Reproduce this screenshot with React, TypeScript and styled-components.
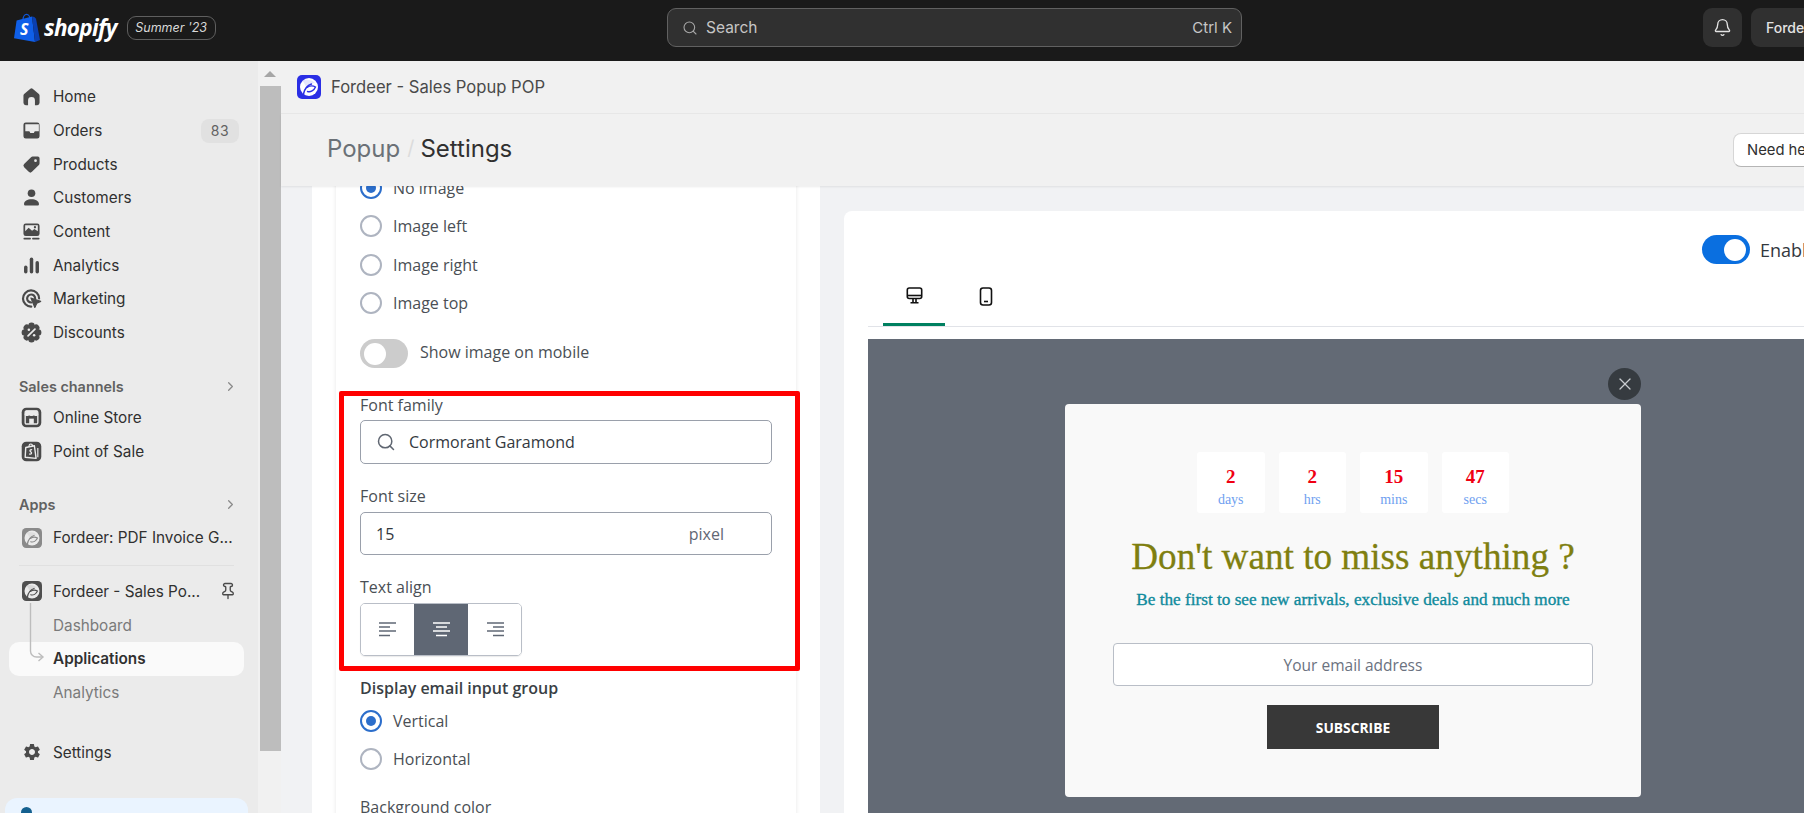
import React from "react";
import styled, { createGlobalStyle } from "styled-components";
import { Bell, ChevronRight, Pin, Search, X } from "lucide-react";
import { MdSettings } from "react-icons/md";

const GlobalStyle = createGlobalStyle`
  html, body {
    margin: 0;
    padding: 0;
    overflow: hidden;
    background: #f1f2f4;
  }
  * {
    box-sizing: border-box;
  }
`;

const uiFont = `Inter, "Liberation Sans", sans-serif`;
const formFont = `"Open Sans", "Noto Sans", sans-serif`;
const popupFont = `"Liberation Serif", serif`;

const Page = styled.div`
  width: 1804px;
  height: 813px;
  overflow: hidden;
  display: flex;
  flex-direction: column;
  font-family: ${uiFont};
`;

/* top bar */
const TopBar = styled.header`
  height: 61px;
  flex-shrink: 0;
  background: #1a1a1a;
  padding-bottom: 6px;
  display: grid;
  grid-template-columns: 667px 575px 1fr;
  align-items: center;
`;

const Brand = styled.div`
  display: flex;
  align-items: center;
  padding-left: 14px;
`;

const Wordmark = styled.span`
  margin-left: 4px;
  color: #fff;
  font: italic 700 22.5px "Open Sans", sans-serif;
  letter-spacing: -0.7px;
`;

const SeasonBadge = styled.span`
  margin-left: 10px;
  height: 24px;
  width: 89px;
  border: 1px solid #5f5f5f;
  border-radius: 9px;
  color: #d8d8d8;
  font-size: 12.5px;
  font-style: italic;
  display: flex;
  align-items: center;
  justify-content: center;
`;

const SearchBox = styled.div`
  height: 39px;
  background: #303030;
  border: 1px solid #616161;
  border-radius: 9px;
  display: flex;
  align-items: center;
  padding: 0 9px 0 14px;
  color: #c6c6c6;
  font-size: 15.5px;
  gap: 8px;
`;

const Shortcut = styled.span`
  margin-left: auto;
  font-size: 15px;
`;

const TopActions = styled.div`
  display: flex;
  gap: 9px;
  padding-left: 461px;
`;

const BellButton = styled.div`
  width: 39px;
  height: 39px;
  flex-shrink: 0;
  border-radius: 9px;
  background: #303030;
  color: #e3e3e3;
  display: flex;
  align-items: center;
  justify-content: center;
`;

const StoreButton = styled.div`
  width: 120px;
  height: 39px;
  flex-shrink: 0;
  border-radius: 9px;
  background: #303030;
  color: #e3e3e3;
  font-size: 14px;
  font-weight: 500;
  padding-left: 15px;
  display: flex;
  align-items: center;
`;

const Body = styled.div`
  flex: 1;
  min-height: 0;
  display: flex;
`;

/* sidebar */
const Sidebar = styled.nav`
  width: 258px;
  flex-shrink: 0;
  background: #ebebeb;
  padding-top: 19px;
  color: #303030;
  font-size: 15.3px;
`;

const NavRow = styled.div<{ $top?: number }>`
  height: 33.7px;
  margin-top: ${(p) => p.$top ?? 0}px;
  padding: 0 24px 0 20px;
  display: flex;
  align-items: center;
  gap: 10px;
  white-space: nowrap;
  color: #303030;
`;

const IconSlot = styled.span<{ $color?: string }>`
  width: 23px;
  height: 23px;
  flex-shrink: 0;
  color: ${(p) => p.$color ?? "#4a4a4a"};
  display: flex;
  align-items: center;
  justify-content: center;
`;

const CountBadge = styled.span`
  margin-left: auto;
  width: 38px;
  height: 24px;
  margin-right: -5px;
  border-radius: 8px;
  background: #e1e1e1;
  color: #616161;
  font-size: 14px;
  letter-spacing: 0.6px;
  display: flex;
  align-items: center;
  justify-content: center;
`;

const SectionHead = styled.div`
  height: 30px;
  margin-top: 21.500px;
  padding: 0 20px 0 19px;
  display: flex;
  align-items: center;
  justify-content: space-between;
  color: #616161;
  font-size: 14.4px;
  font-weight: 600;
`;

const NavDivider = styled.div`
  height: 1px;
  margin: 10px 24px 9px 19px;
  background: #e0e0e0;
`;

const SubNav = styled.div`
  position: relative;
`;

const TreeLine = styled.svg`
  position: absolute;
  left: 28px;
  top: -5px;
  z-index: 1;
`;

const SubRow = styled.div<{ $active?: boolean }>`
  height: 33.7px;
  width: 235px;
  margin-left: 9px;
  padding-left: 44px;
  display: flex;
  align-items: center;
  border-radius: 10px;
  background: ${(p) => (p.$active ? "#fafafa" : "transparent")};
  color: ${(p) => (p.$active ? "#303030" : "#7a7a7a")};
  font-weight: ${(p) => (p.$active ? 600 : 400)};
`;

const PinnedIcon = styled.span`
  margin-left: auto;
  margin-right: -3px;
  color: #4a4a4a;
  display: flex;
`;

const PromoCard = styled.div`
  margin: 29px 10px 0 5px;
  height: 40px;
  padding: 9px 0 0 16px;
  border-radius: 12px;
  background: #eaf4ff;
`;

const PromoDot = styled.span`
  display: block;
  width: 11px;
  height: 11px;
  border-radius: 50%;
  background: #14608f;
`;

const ScrollTrack = styled.div`
  width: 23px;
  flex-shrink: 0;
  background: #f1f1f1;
  display: flex;
  flex-direction: column;
  align-items: flex-end;
`;

const ScrollArrow = styled.div`
  height: 25px;
  width: 100%;
  display: flex;
  align-items: center;
  justify-content: center;
  &::before {
    content: "";
    border-left: 6px solid transparent;
    border-right: 6px solid transparent;
    border-bottom: 6px solid #a6a6a6;
  }
`;

const ScrollThumb = styled.div`
  width: 21px;
  height: 665px;
  background: #bdbdbd;
`;

/* main */
const Main = styled.main`
  width: 1600px;
  flex-shrink: 0;
  display: flex;
  flex-direction: column;
  background: #f1f2f4;
`;

const TitleBar = styled.div`
  height: 53px;
  flex-shrink: 0;
  background: #f1f1f1;
  border-bottom: 1px solid #e8e8e8;
  padding: 0 0 0 16px;
  display: flex;
  align-items: center;
  gap: 10px;
  color: #4a4a4a;
  font-size: 16.6px;
`;

const PageHeader = styled.div`
  height: 72px;
  flex-shrink: 0;
  background: #f1f1f1;
  box-shadow: 0 1px 2px rgba(0, 0, 0, 0.08);
  position: relative;
  z-index: 1;
  padding: 0 38px 0 46px;
  display: flex;
  align-items: center;
`;

const CrumbTrail = styled.div`
  display: flex;
  align-items: center;
  margin-bottom: 4px;
  font-size: 24px;
`;

const CrumbParent = styled.span`
  color: #6b7177;
`;

const CrumbSlash = styled.span`
  margin: 0 6px 0 7px;
  color: #dcdcdc;
  font-size: 20px;
`;

const CrumbCurrent = styled.span`
  color: #303030;
`;

const HelpButton = styled.div`
  margin-left: auto;
  width: 110px;
  height: 34px;
  background: #fff;
  border: 1px solid #d6d6d6;
  border-bottom-color: #b5b5b5;
  border-radius: 8px;
  padding-left: 13px;
  color: #303030;
  font-size: 14.8px;
  display: flex;
  align-items: center;
  white-space: nowrap;
`;

const Content = styled.div`
  flex: 1;
  min-height: 0;
  overflow: hidden;
  display: flex;
  align-items: stretch;
  gap: 24px;
  padding-left: 31px;
`;

/* settings column */
const SettingsColumn = styled.section`
  width: 508px;
  flex-shrink: 0;
  background: #fff;
  padding: 0 24px;
  overflow: hidden;
`;

const SettingsCard = styled.div`
  height: 720px;
  background: #fff;
  padding: 0 24px;
  box-shadow: 0 0 4px rgba(0, 0, 0, 0.1);
  font-family: ${formFont};
  font-size: 16px;
  color: #4a4f55;
`;

const ScrolledForm = styled.div`
  margin-top: -17px;
`;

const RadioRow = styled.div<{ $h?: number; $top?: number }>`
  height: ${(p) => p.$h ?? 38.3}px;
  margin-top: ${(p) => p.$top ?? 0}px;
  display: flex;
  align-items: center;
  gap: 11px;
`;

const RadioMark = styled.span<{ $on?: boolean }>`
  width: 22px;
  height: 22px;
  flex-shrink: 0;
  border-radius: 50%;
  border: 2px solid ${(p) => (p.$on ? "#2c6ecb" : "#aeb4c0")};
  background: #fff;
  display: flex;
  align-items: center;
  justify-content: center;
  &::after {
    content: "";
    display: ${(p) => (p.$on ? "block" : "none")};
    width: 10px;
    height: 10px;
    border-radius: 50%;
    background: #2c6ecb;
  }
`;

const SwitchRow = styled.div`
  margin-top: 17px;
  height: 29px;
  display: flex;
  align-items: center;
  gap: 12px;
`;

const SwitchText = styled.span`
  margin-bottom: 3px;
`;

const Switch = styled.span<{ $on?: boolean }>`
  width: 48px;
  height: 29px;
  flex-shrink: 0;
  border-radius: 15px;
  padding: 0 4px;
  background: ${(p) => (p.$on ? "#0a6fe0" : "#cccccc")};
  display: flex;
  align-items: center;
  justify-content: ${(p) => (p.$on ? "flex-end" : "flex-start")};
  &::after {
    content: "";
    width: 22px;
    height: 22px;
    border-radius: 50%;
    background: #fff;
  }
`;

const FontSection = styled.div`
  position: relative;
  margin-top: 27px;
`;

const RedFrame = styled.div`
  position: absolute;
  left: -21px;
  right: -28px;
  top: -4px;
  bottom: -15px;
  border: 5px solid #ff0000;
  border-radius: 2px;
  pointer-events: none;
`;

const FieldLabel = styled.div<{ $top?: number; $strong?: boolean }>`
  height: 20px;
  margin-top: ${(p) => p.$top ?? 0}px;
  display: flex;
  align-items: center;
  color: ${(p) => (p.$strong ? "#3a3f45" : "#4a4f55")};
  font-weight: ${(p) => (p.$strong ? 600 : 400)};
`;

const TextField = styled.div<{ $h: number; $top: number }>`
  height: ${(p) => p.$h}px;
  margin-top: ${(p) => p.$top}px;
  border: 1px solid #9aa0ab;
  border-radius: 5px;
  background: #fff;
  display: flex;
  align-items: center;
  color: #33383e;
`;

const FieldIcon = styled.span`
  width: 48px;
  padding-left: 15px;
  color: #5f6671;
  display: flex;
`;

const SizeValue = styled.span`
  padding-left: 15px;
`;

const SizeUnit = styled.span`
  margin-left: auto;
  margin-right: 47px;
  color: #5f6774;
`;

const AlignGroup = styled.div`
  margin-top: 6px;
  width: 162px;
  height: 53px;
  display: grid;
  grid-template-columns: 53px 54px 55px;
  border: 1px solid #b9bec7;
  border-radius: 5px;
  box-shadow: 0 1px 1px rgba(0, 0, 0, 0.08);
  overflow: hidden;
`;

const AlignButton = styled.div<{ $on?: boolean }>`
  background: ${(p) => (p.$on ? "#5f6774" : "#fff")};
  color: ${(p) => (p.$on ? "#fff" : "#5f6774")};
  display: flex;
  align-items: center;
  justify-content: center;
`;

/* preview column */
const PreviewCard = styled.section`
  width: 1018px;
  flex-shrink: 0;
  margin-top: 25px;
  background: #fff;
  border-radius: 8px 8px 0 0;
  padding: 24px 24px 0;
  display: flex;
  flex-direction: column;
`;

const EnableRow = styled.div`
  height: 29px;
  padding-left: 834px;
  display: flex;
  align-items: center;
  gap: 10px;
  font-family: ${formFont};
  font-size: 18px;
  font-weight: 500;
  color: #33383e;
`;

const TabStrip = styled.div`
  margin-top: 10px;
  height: 53px;
  flex-shrink: 0;
  padding-left: 15px;
  border-bottom: 1px solid #e1e3e8;
  display: flex;
  gap: 10px;
`;

const DeviceTab = styled.div<{ $on?: boolean }>`
  position: relative;
  width: 62px;
  height: 52px;
  color: #111;
  display: flex;
  align-items: flex-start;
  justify-content: center;
  padding-top: 13px;
  border-bottom: 3px solid ${(p) => (p.$on ? "#008060" : "transparent")};
`;

const PreviewStage = styled.div`
  margin-top: 12px;
  flex: 1;
  background: #636a75;
  padding-top: 65px;
  display: flex;
  justify-content: center;
  align-items: flex-start;
`;

const Popup = styled.div`
  position: relative;
  width: 576px;
  height: 393px;
  background: #f9f9f9;
  border-radius: 4px;
  padding-top: 48px;
  display: flex;
  flex-direction: column;
  align-items: center;
`;

const CloseButton = styled.div`
  position: absolute;
  top: -36px;
  right: 0;
  width: 33px;
  height: 32px;
  border-radius: 50%;
  background: #363b40;
  color: #c9ccd0;
  display: flex;
  align-items: center;
  justify-content: center;
`;

const CountdownRow = styled.div`
  display: flex;
  gap: 14px;
`;

const CountBox = styled.div`
  width: 67.5px;
  height: 61px;
  background: #fff;
  border-radius: 3px;
  padding-top: 14px;
  display: flex;
  flex-direction: column;
  align-items: center;
  font-family: ${popupFont};
`;

const CountValue = styled.span`
  color: #f00012;
  font-size: 19px;
  font-weight: 700;
  line-height: 22px;
`;

const CountUnit = styled.span`
  margin-top: 2px;
  color: #6f9ff0;
  font-size: 14px;
  line-height: 19px;
`;

const PopupTitle = styled.h2`
  margin: 22px 0 0;
  height: 44px;
  font: 400 37.2px/44px ${popupFont};
  -webkit-text-stroke: 0.3px #7f7f10;
  color: #7f7f10;
  white-space: nowrap;
`;

const PopupLead = styled.p`
  margin: 9px 0 0;
  height: 24px;
  font: 400 17.2px/24px ${popupFont};
  -webkit-text-stroke: 0.35px #0f8a9c;
  color: #0f8a9c;
  white-space: nowrap;
`;

const EmailField = styled.div`
  margin-top: 31px;
  width: 480px;
  height: 43px;
  flex-shrink: 0;
  background: #fff;
  border: 1px solid #b9bec7;
  border-radius: 4px;
  display: flex;
  align-items: center;
  justify-content: center;
  font-family: ${formFont};
  font-size: 15.5px;
  color: #6b7280;
`;

const SubscribeButton = styled.div`
  margin-top: 19px;
  width: 172px;
  height: 44px;
  flex-shrink: 0;
  background: #383838;
  color: #fff;
  font-family: ${formFont};
  font-size: 13.8px;
  font-weight: 700;
  display: flex;
  align-items: center;
  justify-content: center;
`;

function ShopifyBag() {
  return (
    <svg width="26" height="30" viewBox="0 0 26 30">
      <path d="M9 7c0-3 1.600-5.600 3.600-5.600S16 4 16 6.500" fill="none" stroke="#0f56d9" strokeWidth="1.400" />
      <path d="M2.600 7.600 18 3.600 21 29 0 25.200z" fill="#0f5fe8" />
      <path d="M18 3.600l2.400.4 1.600 1.800L26 27l-5 2z" fill="#0a3fb0" />
      <text x="6" y="21.500" fill="#fff" fontFamily="Open Sans" fontWeight="700" fontStyle="italic" fontSize="16">
        S
      </text>
    </svg>
  );
}

function HomeIcon() {
  return (
    <svg width="23" height="23" viewBox="0 0 20 20" fill="currentColor">
      <path d="M9 3.200a1.500 1.500 0 0 1 2 0l5.400 4.700c.4.300.6.800.6 1.200v6.400a2 2 0 0 1-2 2h-2v-4a3 3 0 0 0-6 0v4H5a2 2 0 0 1-2-2V9.100c0-.4.200-.9.600-1.200z" />
    </svg>
  );
}

function OrdersIcon() {
  return (
    <svg width="23" height="23" viewBox="0 0 20 20" fill="currentColor">
      <path
        fillRule="evenodd"
        d="M5 3h10a2 2 0 0 1 2 2v10a2 2 0 0 1-2 2H5a2 2 0 0 1-2-2V5a2 2 0 0 1 2-2zm-.4 1.600V10.600h3.200c.4 0 .6.200.7.500l.4 1h3.200l.4-1c.1-.3.300-.5.700-.5h3.200V4.600z"
      />
    </svg>
  );
}

function TagIcon() {
  return (
    <svg width="23" height="23" viewBox="0 0 20 20" fill="currentColor">
      <path
        fillRule="evenodd"
        d="M11 3h4.500A1.500 1.500 0 0 1 17 4.500V9a2 2 0 0 1-.6 1.400l-6 6a2 2 0 0 1-2.800 0l-4-4a2 2 0 0 1 0-2.800l6-6A2 2 0 0 1 11 3zm2.500 2.500a1.200 1.200 0 1 0 0 2.400 1.200 1.200 0 0 0 0-2.400z"
      />
    </svg>
  );
}

function PersonIcon() {
  return (
    <svg width="23" height="23" viewBox="0 0 20 20" fill="currentColor">
      <circle cx="10" cy="6.300" r="3.300" />
      <path d="M3.500 15.600c0-2.600 2.900-4.100 6.500-4.100s6.500 1.500 6.500 4.100c0 .8-.5 1.400-1.300 1.400H4.800c-.8 0-1.300-.6-1.300-1.400z" />
    </svg>
  );
}

function ContentIcon() {
  return (
    <svg width="23" height="23" viewBox="0 0 20 20" fill="currentColor">
      <path
        fillRule="evenodd"
        d="M5 3h10a2 2 0 0 1 2 2v7a2 2 0 0 1-2 2H5a2 2 0 0 1-2-2V5a2 2 0 0 1 2-2zm-.5 6.800 3-3 3 2.600 2-1.600 3 2V4.500H4.500z"
      />
      <circle cx="13" cy="6.300" r="1" />
      <rect x="3" y="15.500" width="6.500" height="1.500" rx=".7" />
      <rect x="10.500" y="15.500" width="6.500" height="1.500" rx=".7" />
    </svg>
  );
}

function BarsIcon() {
  return (
    <svg width="23" height="23" viewBox="0 0 20 20" fill="currentColor">
      <rect x="3.500" y="10" width="3" height="7" rx="1.500" />
      <rect x="8.500" y="3" width="3" height="14" rx="1.500" />
      <rect x="13.500" y="6" width="3" height="11" rx="1.500" />
    </svg>
  );
}

function TargetIcon() {
  return (
    <svg width="23" height="23" viewBox="0 0 20 20" fill="none" stroke="currentColor">
      <path d="M16.600 10a7 7 0 1 0-6.800 7" strokeWidth="1.900" strokeLinecap="round" />
      <path d="M13.200 10a3.500 3.500 0 1 0-3.400 3.500" strokeWidth="1.900" strokeLinecap="round" />
      <path d="M9.500 9.500 18 12.500l-3.400 1.700-1.700 3.600z" fill="currentColor" strokeWidth="1" strokeLinejoin="round" />
    </svg>
  );
}

function DiscountIcon() {
  return (
    <svg width="23" height="23" viewBox="0 0 20 20" fill="currentColor">
      {[0, 45, 90, 135, 180, 225, 270, 315].map((deg) => (
        <circle key={deg} cx="10" cy="4.200" r="2.800" transform={`rotate(${deg} 10 10)`} />
      ))}
      <circle cx="10" cy="10" r="6" />
      <path d="M7 13l6-6" stroke="#ebebeb" strokeWidth="1.500" strokeLinecap="round" />
      <circle cx="7.700" cy="7.700" r="1.100" fill="#ebebeb" />
      <circle cx="12.300" cy="12.300" r="1.100" fill="#ebebeb" />
    </svg>
  );
}

function StoreIcon() {
  return (
    <svg width="23" height="23" viewBox="0 0 20 20">
      <rect x="1.500" y="1.500" width="17" height="17" rx="4" fill="currentColor" />
      <rect x="4.500" y="4.200" width="11" height="11.500" rx="1.200" fill="none" stroke="#ebebeb" strokeWidth="1.200" />
      <path d="M4 7.200 5.200 4h9.600L16 7.200c0 1-1 1.600-2 1.600s-2-.5-2-.5-1 .5-2 .5-2-.5-2-.5-1 .5-2 .5-2-.6-2-1.600z" fill="#ebebeb" />
      <rect x="8" y="11" width="4" height="4.500" fill="#ebebeb" />
    </svg>
  );
}

function PosIcon() {
  return (
    <svg width="23" height="23" viewBox="0 0 20 20">
      <rect x="1.500" y="1.500" width="17" height="17" rx="4" fill="currentColor" />
      <path d="M5 6.500 12.500 5l1.500 11-9.500-1z" fill="none" stroke="#ebebeb" strokeWidth="1.200" strokeLinejoin="round" />
      <path d="M7.800 6c0-1.500.7-2.500 1.600-2.500s1.500 1 1.500 2" fill="none" stroke="#ebebeb" strokeWidth="1" />
      <path d="M10.500 8.500c-1.500-.6-2.500.8-1.200 1.700s.8 2.500-1.300 2" fill="none" stroke="#ebebeb" strokeWidth="1.200" />
      <path d="M15.500 7v8" stroke="#ebebeb" strokeWidth="1" />
    </svg>
  );
}

function AppMark({ size, ground, leaf }: { size: number; ground: string; leaf: string }) {
  return (
    <svg width={size} height={size} viewBox="0 0 24 24">
      <rect x="0" y="0" width="24" height="24" rx="5" fill={ground} />
      <circle cx="12" cy="12" r="9" fill={leaf} />
      <path d="M5 5.500C10 4 15 5 18 8c-4-.5-7 1.500-8.500 5-1-3-2.500-5.500-4.500-7.500z" fill={ground} opacity=".12" />
      <path d="M6.500 19c1-5 3.500-8.500 8-10" fill="none" stroke={ground} strokeWidth="1.500" strokeLinecap="round" />
      <path d="M10 12.500c3-2 6-2 8.500-.5-1.500 3.500-5 5.500-8 4.500" fill="none" stroke={ground} strokeWidth="1.400" strokeLinecap="round" />
    </svg>
  );
}

function AlignLinesIcon({ align }: { align: "left" | "center" | "right" }) {
  const short = align === "left" ? [0, 11] : align === "center" ? [3, 14] : [6, 17];
  return (
    <svg width="17" height="15" viewBox="0 0 17 15" stroke="currentColor" strokeWidth="1.400">
      <path d="M0 1h17" />
      <path d={`M${short[0]} 5h${short[1] - short[0]}`} />
      <path d="M0 9h17" />
      <path d={`M${short[0]} 13.500h${short[1] - short[0]}`} />
    </svg>
  );
}

function DesktopIcon() {
  return (
    <svg width="17" height="17" viewBox="0 0 17 17" fill="none" stroke="currentColor" strokeWidth="1.600">
      <rect x="1.300" y="1" width="14.400" height="10.500" rx="2" />
      <path d="M1.500 8.500h14" />
      <path d="M7 11.500v4M10 11.500v4M4.500 15.800h8" />
    </svg>
  );
}

function MobileIcon() {
  return (
    <svg width="14" height="19" viewBox="0 0 14 19" fill="none" stroke="currentColor" strokeWidth="1.600">
      <rect x="1.500" y="1" width="11" height="17" rx="2.500" />
      <path d="M5 14.500h4" />
    </svg>
  );
}

const mainNav = [
  { label: "Home", icon: <HomeIcon /> },
  { label: "Orders", icon: <OrdersIcon />, count: "83" },
  { label: "Products", icon: <TagIcon /> },
  { label: "Customers", icon: <PersonIcon /> },
  { label: "Content", icon: <ContentIcon /> },
  { label: "Analytics", icon: <BarsIcon /> },
  { label: "Marketing", icon: <TargetIcon /> },
  { label: "Discounts", icon: <DiscountIcon /> },
];

const imageOptions = ["No image", "Image left", "Image right", "Image top"];
const countdown = [
  { value: "2", unit: "days" },
  { value: "2", unit: "hrs" },
  { value: "15", unit: "mins" },
  { value: "47", unit: "secs" },
];

export default function App() {
  return (
    <Page>
      <GlobalStyle />
      <TopBar>
        <Brand>
          <ShopifyBag />
          <Wordmark>shopify</Wordmark>
          <SeasonBadge>Summer '23</SeasonBadge>
        </Brand>
        <SearchBox>
          <Search size={16} strokeWidth={1.6} color="#a8a8a8" />
          Search
          <Shortcut>Ctrl K</Shortcut>
        </SearchBox>
        <TopActions>
          <BellButton>
            <Bell size={19} strokeWidth={1.7} />
          </BellButton>
          <StoreButton>Fordeer</StoreButton>
        </TopActions>
      </TopBar>

      <Body>
        <Sidebar>
          {mainNav.map((item) => (
            <NavRow key={item.label}>
              <IconSlot>{item.icon}</IconSlot>
              {item.label}
              {item.count && <CountBadge>{item.count}</CountBadge>}
            </NavRow>
          ))}

          <SectionHead>
            Sales channels
            <ChevronRight size={15} color="#8a8a8a" />
          </SectionHead>
          <NavRow>
            <IconSlot>
              <StoreIcon />
            </IconSlot>
            Online Store
          </NavRow>
          <NavRow>
            <IconSlot>
              <PosIcon />
            </IconSlot>
            Point of Sale
          </NavRow>

          <SectionHead>
            Apps
            <ChevronRight size={15} color="#8a8a8a" />
          </SectionHead>
          <NavRow $top={1}>
            <IconSlot>
              <AppMark size={20} ground="#8a8a8a" leaf="#ebebeb" />
            </IconSlot>
            Fordeer: PDF Invoice G...
          </NavRow>
          <NavDivider />
          <NavRow>
            <IconSlot>
              <AppMark size={20} ground="#4f4f4f" leaf="#ebebeb" />
            </IconSlot>
            Fordeer - Sales Po...
            <PinnedIcon>
              <Pin size={18} strokeWidth={1.8} />
            </PinnedIcon>
          </NavRow>
          <SubNav>
            <TreeLine width="20" height="66" viewBox="0 0 20 66" fill="none" stroke="#bdbdbd" strokeWidth="1.400">
              <path d="M2.500 0v48a6 6 0 0 0 6 6h6" />
              <path d="M10.500 50l4.500 4-4.500 4" />
            </TreeLine>
            <SubRow>Dashboard</SubRow>
            <SubRow $active>Applications</SubRow>
            <SubRow>Analytics</SubRow>
          </SubNav>
          <NavRow $top={26}>
            <IconSlot>
              <MdSettings size={20} />
            </IconSlot>
            Settings
          </NavRow>
          <PromoCard>
            <PromoDot />
          </PromoCard>
        </Sidebar>

        <ScrollTrack>
          <ScrollArrow />
          <ScrollThumb />
        </ScrollTrack>

        <Main>
          <TitleBar>
            <AppMark size={24} ground="#2a2ee5" leaf="#ffffff" />
            Fordeer - Sales Popup POP
          </TitleBar>
          <PageHeader>
            <CrumbTrail>
              <CrumbParent>Popup</CrumbParent>
              <CrumbSlash>/</CrumbSlash>
              <CrumbCurrent>Settings</CrumbCurrent>
            </CrumbTrail>
            <HelpButton>Need help?</HelpButton>
          </PageHeader>

          <Content>
            <SettingsColumn>
              <SettingsCard>
                <ScrolledForm>
                  {imageOptions.map((label, i) => (
                    <RadioRow key={label}>
                      <RadioMark $on={i === 0} />
                      {label}
                    </RadioRow>
                  ))}
                  <SwitchRow>
                    <Switch />
                    <SwitchText>Show image on mobile</SwitchText>
                  </SwitchRow>

                  <FontSection>
                    <FieldLabel>Font family</FieldLabel>
                    <TextField $h={44} $top={5}>
                      <FieldIcon>
                        <Search size={20} strokeWidth={1.8} />
                      </FieldIcon>
                      Cormorant Garamond
                    </TextField>
                    <FieldLabel $top={22}>Font size</FieldLabel>
                    <TextField $h={43} $top={6}>
                      <SizeValue>15</SizeValue>
                      <SizeUnit>pixel</SizeUnit>
                    </TextField>
                    <FieldLabel $top={22}>Text align</FieldLabel>
                    <AlignGroup>
                      <AlignButton>
                        <AlignLinesIcon align="left" />
                      </AlignButton>
                      <AlignButton $on>
                        <AlignLinesIcon align="center" />
                      </AlignButton>
                      <AlignButton>
                        <AlignLinesIcon align="right" />
                      </AlignButton>
                    </AlignGroup>
                    <RedFrame />
                  </FontSection>

                  <FieldLabel $top={22} $strong>
                    Display email input group
                  </FieldLabel>
                  <RadioRow $h={38} $top={4}>
                    <RadioMark $on />
                    Vertical
                  </RadioRow>
                  <RadioRow $h={38}>
                    <RadioMark />
                    Horizontal
                  </RadioRow>
                  <FieldLabel $top={19}>Background color</FieldLabel>
                </ScrolledForm>
              </SettingsCard>
            </SettingsColumn>

            <PreviewCard>
              <EnableRow>
                <Switch $on />
                Enable
              </EnableRow>
              <TabStrip>
                <DeviceTab $on>
                  <DesktopIcon />
                </DeviceTab>
                <DeviceTab>
                  <MobileIcon />
                </DeviceTab>
              </TabStrip>
              <PreviewStage>
                <Popup>
                  <CloseButton>
                    <X size={20} strokeWidth={1.5} />
                  </CloseButton>
                  <CountdownRow>
                    {countdown.map((c) => (
                      <CountBox key={c.unit}>
                        <CountValue>{c.value}</CountValue>
                        <CountUnit>{c.unit}</CountUnit>
                      </CountBox>
                    ))}
                  </CountdownRow>
                  <PopupTitle>Don't want to miss anything ?</PopupTitle>
                  <PopupLead>Be the first to see new arrivals, exclusive deals and much more</PopupLead>
                  <EmailField>Your email address</EmailField>
                  <SubscribeButton>SUBSCRIBE</SubscribeButton>
                </Popup>
              </PreviewStage>
            </PreviewCard>
          </Content>
        </Main>
      </Body>
    </Page>
  );
}
